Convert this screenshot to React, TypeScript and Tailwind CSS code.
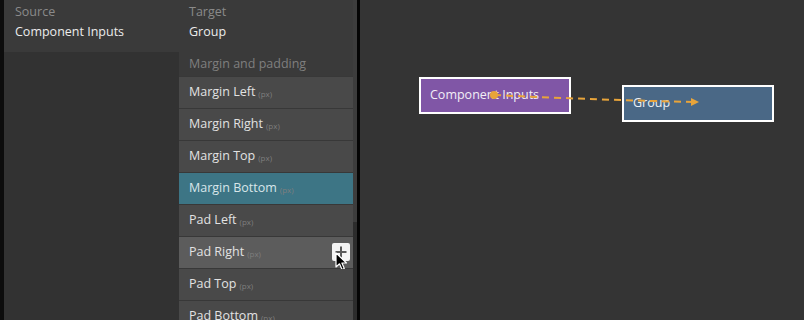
import React from "react";

const rows = [
  { label: "Margin Left", state: "normal" },
  { label: "Margin Right", state: "normal" },
  { label: "Margin Top", state: "normal" },
  { label: "Margin Bottom", state: "selected" },
  { label: "Pad Left", state: "normal" },
  { label: "Pad Right", state: "hover" },
  { label: "Pad Top", state: "normal" },
  { label: "Pad Bottom", state: "normal" },
];

function Row({ label, state }: { label: string; state: string }) {
  const bg =
    state === "selected"
      ? "bg-[#3d7585]"
      : state === "hover"
      ? "bg-[#5c5c5c]"
      : "bg-[#494949]";
  return (
    <div
      className={`relative flex h-[32px] shrink-0 items-center border-b border-[#383838] pl-[10px] ${bg}`}
    >
      <span className={state === "selected" ? "text-[12.5px] text-[#d8e6ea]" : "text-[12.5px] text-[#e2e2e2]"}>
        {label}
      </span>
      <span className="ml-[3px] mt-[3px] text-[8px] text-[#7e7e7e]">(px)</span>
      {state === "hover" && (
        <div className="absolute right-[3px] top-[6px] flex h-[18px] w-[18px] items-center justify-center rounded-[2px] bg-[#f4f4f4]">
          <svg width="12" height="12" viewBox="0 0 12 12">
            <path d="M6 0.5v11M0.5 6h11" stroke="#5a5a5a" strokeWidth="2" />
          </svg>
        </div>
      )}
      {state === "hover" && (
        <svg
          className="absolute left-[156px] top-[15px]"
          width="14"
          height="20"
          viewBox="0 0 14 20"
        >
          <path
            d="M1 1 L1 15 L4.5 11.8 L7 17.5 L9.3 16.5 L6.9 11 L11.5 11 Z"
            fill="#000"
            stroke="#fff"
            strokeWidth="1.2"
            strokeLinejoin="round"
          />
        </svg>
      )}
    </div>
  );
}

export default function App() {
  return (
    <div
      className="flex h-[320px] w-[804px] overflow-hidden bg-[#343434]"
      style={{ fontFamily: "'Open Sans', 'Noto Sans', sans-serif" }}
    >
      <div className="w-[4px] shrink-0 bg-[#0c0c0c]" />
      {/* Source column */}
      <div className="flex w-[175px] shrink-0 flex-col bg-[#323232]">
        <div className="flex h-[52px] flex-col bg-[#3a3a3a] px-[11px] pt-[3px]">
          <span className="text-[12.5px] leading-[18px] text-[#8a8a8a]">Source</span>
          <span className="mt-[2px] text-[12.5px] leading-[18px] text-[#ececec]">Component Inputs</span>
        </div>
      </div>
      {/* Target column */}
      <div className="flex w-[174px] shrink-0 flex-col bg-[#3a3a3a]">
        <div className="flex flex-col px-[10px] pt-[3px]">
          <span className="text-[12.5px] leading-[18px] text-[#8a8a8a]">Target</span>
          <span className="mt-[2px] text-[12.5px] leading-[18px] text-[#ececec]">Group</span>
          <span className="mt-[14px] text-[12.5px] leading-[18px] text-[#7f7f7f]">Margin and padding</span>
        </div>
        <div className="mt-[3px] flex flex-col border-t border-[#383838]">
          {rows.map((r) => (
            <Row key={r.label} label={r.label} state={r.state} />
          ))}
        </div>
      </div>
      {/* scrollbar */}
      <div className="flex w-[4px] shrink-0 flex-col bg-[#3a3a3a]">
        <div className="h-[222px] bg-[#3d3d3d]" />
        <div className="flex-1 bg-[#2c2c2c]" />
      </div>
      <div className="w-[3px] shrink-0 bg-[#050505]" />
      {/* Canvas */}
      <div className="relative flex-1 bg-[#343434]">
        <div className="absolute left-[59px] top-[77px] flex h-[37px] w-[152px] items-center border-2 border-white bg-[#8056a6] pl-[9px]">
          <span className="text-[12.5px] text-[#f2eef6]">Component Inputs</span>
        </div>
        <div className="absolute left-[262px] top-[85px] flex h-[37px] w-[152px] items-center border-2 border-white bg-[#4a6886] pl-[9px]">
          <span className="text-[12.5px] text-[#eef2f6]">Group</span>
        </div>
        <svg className="absolute left-0 top-0" width="445" height="320">
          <path
            d="M134 95 Q 239 100 335 102"
            fill="none"
            stroke="#e8a43a"
            strokeWidth="2"
            strokeDasharray="7 5"
          />
          <circle cx="134" cy="95" r="4" fill="#e8a43a" />
          <path d="M331 98 L339 102 L331 106 Z" fill="#e8a43a" />
        </svg>
      </div>
    </div>
  );
}
